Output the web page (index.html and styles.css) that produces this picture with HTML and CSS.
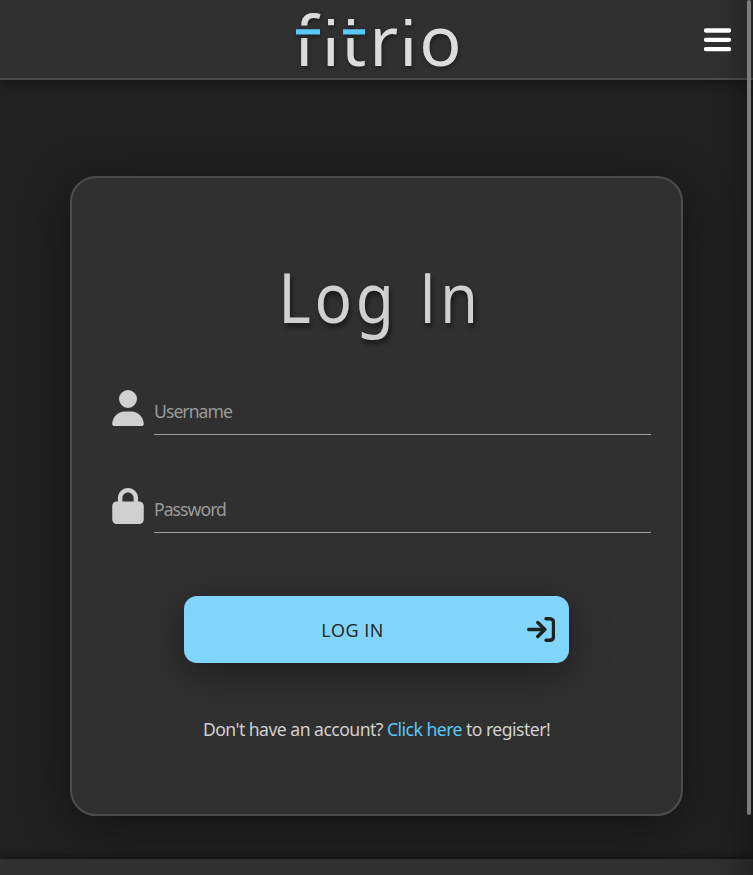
FILE: index.html
```
<!DOCTYPE html>
<html lang="en">
<head>
<meta charset="utf-8">
<title>fitrio - Log In</title>
<link rel="stylesheet" href="styles.css">
</head>
<body>
<header class="header">
  <svg class="logo" width="180" height="78" viewBox="290 0 180 78" role="img" aria-label="fitrio">
    <text class="logo-text logo-ink" y="66" x="293.6 321.8 341 369.2 399.2 419.2">fitrio</text>
    <path class="logo-gap" d="M290 25.500H370V38H290ZM325 8H370V26H325ZM401 8H415V38H401Z"/>
    <g class="logo-ink">
      <path d="M328 19h6v6.300h-6ZM348 19h6v6.300h-6ZM405.300 19h6v6.300h-6Z"/>
      <path class="logo-bar" d="M296 29.200h24v5.300h-24ZM343 29.200h22v5.300h-22Z"/>
    </g>
  </svg>
  <button class="menu" aria-label="Menu">
    <svg width="27" height="24" viewBox="0 0 27 24"><path d="M2 2.500h23M2 11.800h23M2 21.100h23"/></svg>
  </button>
</header>
<main class="main">
  <form class="card">
    <h1 class="title">Log <span class="title-in">In</span></h1>
    <label class="field">
      <svg class="field-icon" width="32" height="36" viewBox="0 0 448 512"><path d="M224 256A128 128 0 1 0 224 0a128 128 0 0 0 0 256zm-45.700 48C79.800 304 0 383.800 0 482.300 0 498.700 13.300 512 29.700 512h388.600c16.400 0 29.700-13.300 29.700-29.700C448 383.800 368.200 304 269.700 304z"/></svg>
      <input class="input" type="text" placeholder="Username">
    </label>
    <label class="field">
      <svg class="field-icon" width="32" height="36" viewBox="0 0 448 512"><path d="M144 144v48h160v-48c0-44.200-35.800-80-80-80s-80 35.800-80 80zm-64 48v-48C80 64.500 144.500 0 224 0s144 64.500 144 144v48h16c35.300 0 64 28.700 64 64v192c0 35.300-28.700 64-64 64H64c-35.300 0-64-28.700-64-64V256c0-35.300 28.700-64 64-64z"/></svg>
      <input class="input" type="password" placeholder="Password">
    </label>
    <button class="submit" type="button">
      <span class="submit-label">LOG IN</span>
      <svg class="submit-icon" width="28" height="25" viewBox="0 0 28 25"><path d="M1.700 12.500h16M10.800 5.500l7 7-7 7M19 1.700h4a3.500 3.500 0 0 1 3.500 3.500v14.600a3.500 3.500 0 0 1-3.500 3.500h-4"/></svg>
    </button>
    <p class="register">Don't have an account? <a class="link" href="#">Click here</a> to register!</p>
  </form>
</main>
<footer class="footer"></footer>
<div class="drawer-shadow"></div>
<div class="scroll-thumb"></div>
</body>
</html>
```
FILE: styles.css
```
* { box-sizing: border-box; }
body {
  margin: 0;
  height: 875px;
  overflow: hidden;
  display: flex;
  flex-direction: column;
  background: #212121;
  color: #d0d0d0;
  font-family: "Noto Sans", sans-serif;
}
.header {
  height: 80px;
  flex: none;
  display: grid;
  grid-template-columns: 290px 180px 1fr;
  background: #303030;
  border-bottom: 2px solid #4d4d4d;
  box-shadow: 0 2px 12px rgba(0, 0, 0, .45);
}
.logo { grid-column: 2; overflow: visible; }
.logo-ink { fill: #dcdcdc; filter: drop-shadow(1px 2px 2px rgba(0, 0, 0, .4)); }
.logo-text { font-size: 70px; }
.logo-gap { fill: #303030; }
.logo-bar { fill: #5ac8fa; }
.menu {
  justify-self: end;
  align-self: start;
  position: relative;
  z-index: 3;
  margin: 28px 22px 0 0;
  padding: 0;
  border: 0;
  background: none;
}
.menu svg { display: block; fill: none; stroke: #fff; stroke-width: 4.300; stroke-linecap: round; }
.main { flex: 1; padding: 96px 70px 0; }
.card {
  height: 640px;
  display: flex;
  flex-direction: column;
  background: #303030;
  border: 2px solid #4d4d4d;
  border-radius: 26px;
  padding: 0 30px 0 40px;
  box-shadow: 0 10px 50px rgba(0, 0, 0, .45);
}
.title {
  margin: 68px 0 0 -3px;
  height: 100px;
  line-height: 100px;
  text-align: center;
  font-size: 69px;
  font-weight: 400;
  letter-spacing: 4px;
  word-spacing: 2px;
  transform: scaleX(.9);
  text-shadow: 2px 4px 6px rgba(0, 0, 0, .5);
}
.title-in { font-family: "Open Sans", sans-serif; }
.field { display: flex; height: 46px; margin-top: 43px; }
.field + .field { margin-top: 52px; }
.field-icon { flex: none; fill: #d0d0d0; margin: 1px 10px 0 0; }
.input {
  flex: 1;
  min-width: 0;
  height: 46px;
  border: 0;
  border-bottom: 1px solid #a0a0a0;
  outline: 0;
  padding: 0 0 1px;
  background: none;
  font: 17.600px "Noto Sans", sans-serif;
  letter-spacing: -.950px;
}
.input::placeholder { color: #9b9b9b; opacity: 1; }
.submit {
  width: 385px;
  height: 67px;
  flex: none;
  margin: 63px 0 0 72px;
  padding: 0 14px 0 0;
  display: flex;
  align-items: center;
  border: 0;
  border-radius: 13px;
  background: #81d4fa;
  box-shadow: 0 10px 40px rgba(0, 0, 0, .4);
}
.submit-label {
  flex: 1;
  padding-right: 6px;
  color: #212121;
  font: 18px "Open Sans", sans-serif;
  letter-spacing: .5px;
  text-align: center;
}
.submit-icon { flex: none; fill: none; stroke: #212121; stroke-width: 3.400; stroke-linecap: round; stroke-linejoin: round; }
.register {
  margin: 54px 0 0 -10px;
  line-height: 24px;
  text-align: center;
  font-size: 17.600px;
  letter-spacing: -.530px;
  white-space: nowrap;
}
.link { color: #5ac8fa; text-decoration: none; }
.footer { flex: none; position: relative; height: 16px; background: #303030; box-shadow: 0 0 10px rgba(0, 0, 0, .7); }
.drawer-shadow {
  position: absolute;
  z-index: 2;
  top: 0;
  right: 0;
  width: 53px;
  height: 875px;
  pointer-events: none;
  background: linear-gradient(to right, transparent, rgba(0, 0, 0, .06) 50%, rgba(0, 0, 0, .25));
}
.scroll-thumb {
  position: absolute;
  z-index: 3;
  top: 0;
  right: 2px;
  width: 4px;
  height: 815px;
  border-radius: 2px;
  background: #7c7c7c;
}
```
